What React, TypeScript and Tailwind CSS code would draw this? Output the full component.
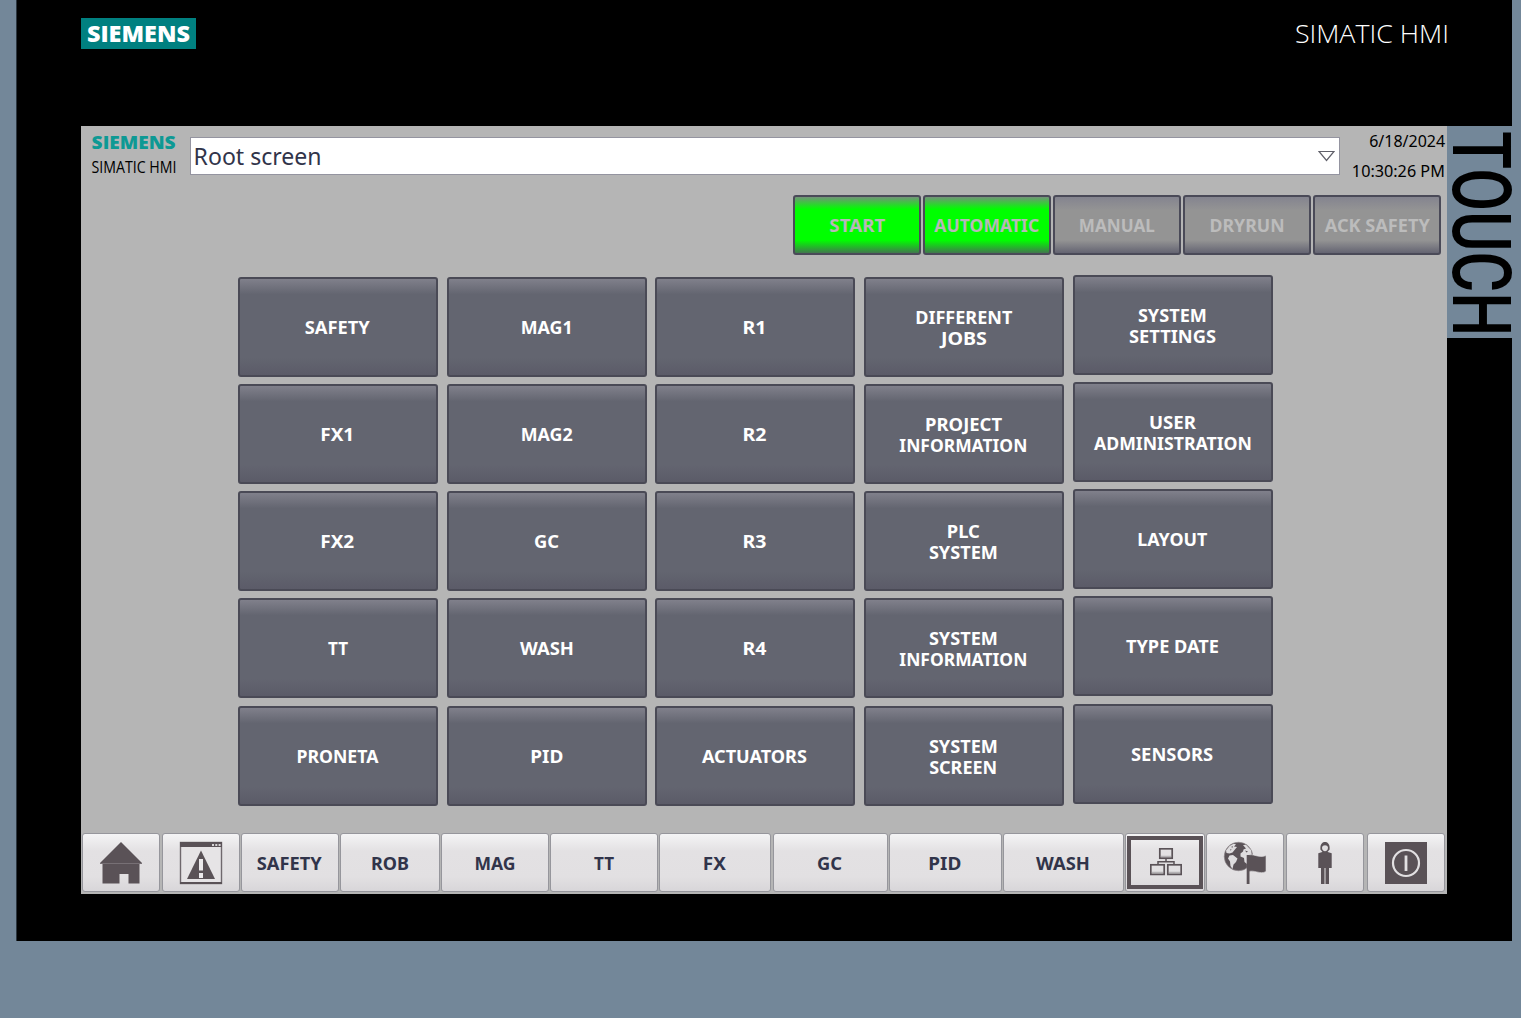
import { useLayoutEffect, useRef, useState } from "react";
import type { ReactNode } from "react";

/* Single line of text stretched horizontally to a given advance width. */
function Fit({ w, className = "", children }: { w: number; className?: string; children: ReactNode }) {
  const ref = useRef<HTMLSpanElement>(null);
  const [scale, setScale] = useState(1);
  useLayoutEffect(() => {
    if (ref.current) setScale(w / parseFloat(getComputedStyle(ref.current).width));
  }, [w]);
  return (
    <span className={`flex justify-center whitespace-nowrap ${className}`} style={{ width: w }}>
      <span ref={ref} className="inline-block shrink-0" style={{ transform: `scaleX(${scale})` }}>
        {children}
      </span>
    </span>
  );
}

type Line = [string, number];

const menu: Line[][][] = [
  [[["SAFETY", 65]], [["MAG1", 52]], [["R1", 24]], [["DIFFERENT", 97], ["JOBS", 46]], [["SYSTEM", 69], ["SETTINGS", 87]]],
  [[["FX1", 34]], [["MAG2", 52]], [["R2", 24]], [["PROJECT", 77], ["INFORMATION", 128]], [["USER", 47], ["ADMINISTRATION", 158]]],
  [[["FX2", 34]], [["GC", 25]], [["R3", 24]], [["PLC", 33], ["SYSTEM", 69]], [["LAYOUT", 70]]],
  [[["TT", 20]], [["WASH", 54]], [["R4", 24]], [["SYSTEM", 69], ["INFORMATION", 128]], [["TYPE DATE", 93]]],
  [[["PRONETA", 82]], [["PID", 33]], [["ACTUATORS", 105]], [["SYSTEM", 69], ["SCREEN", 68]], [["SENSORS", 82]]],
];

const modes: { label: string; w: number; on?: boolean }[] = [
  { label: "START", w: 56, on: true },
  { label: "AUTOMATIC", w: 105, on: true },
  { label: "MANUAL", w: 76 },
  { label: "DRYRUN", w: 75 },
  { label: "ACK SAFETY", w: 105 },
];

const nav: { label: string; w: number; size: string }[] = [
  { label: "SAFETY", w: 65, size: "w-[98px] mr-[1px]" },
  { label: "ROB", w: 38, size: "w-[100px] mr-[1px]" },
  { label: "MAG", w: 41, size: "w-[108px] mr-[1px]" },
  { label: "TT", w: 20, size: "w-[108px] mr-[1px]" },
  { label: "FX", w: 23, size: "w-[112px] mr-[2px]" },
  { label: "GC", w: 25, size: "w-[115px] mr-[1px]" },
  { label: "PID", w: 33, size: "w-[113px] mr-[1px]" },
  { label: "WASH", w: 54, size: "w-[121px] mr-[1px]" },
];

const key =
  "flex h-[59px] shrink-0 items-center justify-center rounded-[3px] border border-[#96969c] bg-[linear-gradient(180deg,#f4f4f5_0%,#e3e1e3_30%,#e2e0e2_75%,#d8d6d9_100%)]";

function HomeIcon() {
  return (
    <svg width="44" height="44" viewBox="0 0 44 44" fill="#5a5257">
      <path d="M22 1 43 22H1Z" />
      <path d="M3.500 23H40.500V42.500H29.500V33H20.500V42.500H3.500Z" />
      <path d="M1 22.500H43" stroke="#777075" strokeWidth="1" />
    </svg>
  );
}

function AlarmIcon() {
  return (
    <svg width="44" height="44" viewBox="0 0 44 44">
      <rect x="1.500" y="1.500" width="41" height="41" fill="#e6e4e6" stroke="#6f686d" strokeWidth="1.400" />
      <path d="M1 1H43V6H1Z" fill="#5a5257" />
      <path d="M1 41H43V43H1Z" fill="#5a5257" />
      <path d="M33 3H35V5H33ZM36.300 3H38.300V5H36.300ZM39.600 3H41.600V5H39.600Z" fill="#d8d6d8" />
      <path d="M22 9.500 36 38H8Z" fill="#5a5257" />
      <path d="M20 18H24V29.500H20ZM20 32H24V37H20Z" fill="#eceaec" />
    </svg>
  );
}

function NetworkIcon() {
  return (
    <svg width="32" height="28" viewBox="0 0 32 28" fill="#dedcde" stroke="#5a5257">
      <path d="M16 10V13.500M8 17V13.700H24V17" fill="none" strokeWidth="1.500" />
      <path d="M11 8.500H21M2 24.500H13M19 24.500H30" strokeWidth="1.600" stroke="#b5b2b5" />
      <rect x="9.800" y="0.800" width="12.400" height="9.400" fill="none" strokeWidth="1.700" />
      <rect x="0.800" y="16.800" width="13.400" height="9.600" fill="none" strokeWidth="1.700" />
      <rect x="17.800" y="16.800" width="13.400" height="9.600" fill="none" strokeWidth="1.700" />
    </svg>
  );
}

function LanguageIcon() {
  return (
    <svg width="44" height="44" viewBox="0 0 44 44">
      <circle cx="15.500" cy="15.500" r="14.300" fill="#5a5257" stroke="#938d91" strokeWidth="0.600" />
      <path
        d="M3 9.500 6.500 5 10.500 2.700 13 3.200 11 5.500 14 6 11.500 9 9.500 11.500 6.500 12.500 3.500 12Z"
        fill="#dedcde"
      />
      <path d="M6.500 14.500 10 14 14.500 17.500 13 21 10.500 23.500 9.500 28 7.500 25 7 20.500 5 17.500Z" fill="#dedcde" />
      <path d="M8.500 5.500 10 5.200 9 7.200ZM7 8.500 8.500 8.200 7.800 9.800Z" fill="#5a5257" />
      <path d="M20 4 23 3.800 28 9 28.800 13.500 25.500 14.500 24 23 21.500 21 21 17 17.500 15.500 17.500 12.500 20 10.500 20.500 8.500 23 7.500Z" fill="#dedcde" />
      <path d="M22 9.500 25 10.500 23.500 11.500Z" fill="#5a5257" />
      <path d="M24 14.500C30 11.500 36 18 43 14.500V30.500C37 34 31 28 24.500 31Z" fill="#5a5257" stroke="#dedcde" strokeWidth="0.600" />
      <rect x="23.700" y="14" width="2.800" height="29" fill="#5a5257" />
    </svg>
  );
}

function UserIcon() {
  return (
    <svg width="20" height="44" viewBox="0 0 20 44">
      <path d="M5.500 8.500C4 -1.500 16 -1.500 14.500 8.500L12.500 11H7.500Z" fill="#5a5257" />
      <path d="M7 6.500C7.500 3.500 12.500 3.500 13 6.500C13 11.500 7 11.500 7 6.500Z" fill="#e0dee0" />
      <path
        d="M7.300 11H12.700L16.700 12.300V27H14V43H6V27H3.300V12.300Z"
        fill="#5a5257"
      />
      <path d="M10 27V43" stroke="#e2e0e2" strokeWidth="1" />
    </svg>
  );
}

function PowerIcon() {
  return (
    <svg width="44" height="44" viewBox="0 0 44 44">
      <rect x="1" y="1" width="42" height="42" fill="#5a5257" />
      <circle cx="22" cy="22" r="13" fill="none" stroke="#e2e0e2" strokeWidth="2.200" />
      <path d="M22 14.500V30" stroke="#e2e0e2" strokeWidth="2.800" />
    </svg>
  );
}

export default function App() {
  return (
    <div className="flex h-[1018px] w-[1521px] items-start overflow-hidden bg-[#738799] pl-4 font-['Noto_Sans',sans-serif]">
      <div className="flex h-[940.5px] w-[1495.5px] flex-col border-l border-[#2c3640] bg-black">
        <header className="flex h-[126px] items-start justify-between pr-[63px] pl-[64px]">
          <div className="mt-[18px] flex h-[31px] w-[115px] items-center justify-center bg-[#008080] text-white">
            <Fit w={103} className="font-['Open_Sans',sans-serif] text-[22px] leading-[31px] font-extrabold">SIEMENS</Fit>
          </div>
          <Fit w={154} className="mt-[18px] font-['Open_Sans',sans-serif] text-[25px] leading-[30px] font-light text-white">
            SIMATIC HMI
          </Fit>
        </header>

        <div className="flex">
          <main className="ml-[64px] flex h-[768px] w-[1366px] shrink-0 flex-col bg-[#b5b5b5]">
            <div className="flex h-[69px] shrink-0 items-start">
              <div className="ml-[10px] flex w-[86px] flex-col items-center pt-[5px]">
                <Fit w={84} className="font-['Open_Sans',sans-serif] text-[18px] leading-[23px] font-extrabold text-[#0d9994]">SIEMENS</Fit>
                <Fit w={85} className="font-['Open_Sans',sans-serif] text-[16px] leading-[26px] text-black">SIMATIC HMI</Fit>
              </div>
              <div className="mt-[11px] ml-[13px] flex h-[38px] w-[1150px] items-center justify-between border border-[#9494a0] bg-white pr-[4px] pl-[2.500px] text-[#31344a]">
                <Fit w={128} className="text-[24px] leading-9">Root screen</Fit>
                <svg width="17" height="12" viewBox="0 0 17 12" fill="white" stroke="#60606a" strokeWidth="1.200">
                  <path d="M1 1.500H16L8.500 10.500Z" />
                </svg>
              </div>
              <div className="flex flex-1 flex-col items-end pr-[2px] text-[16.5px] leading-[30px] text-black">
                <Fit w={76}>6/18/2024</Fit>
                <Fit w={93}>10:30:26 PM</Fit>
              </div>
            </div>

            <div className="flex h-[60px] shrink-0 justify-end gap-[2px] pr-[6px]">
              {modes.map((m) => (
                <button
                  key={m.label}
                  className={`flex w-[128px] items-center justify-center rounded-[3px] border-2 border-[#4a4a58] text-[17px] leading-[21px] font-bold ${
                    m.on
                      ? "bg-[linear-gradient(180deg,#729378_0%,#00ff00_22%,#00ff00_77%,#42774e_100%)] text-[#b8b8b8]"
                      : "bg-[linear-gradient(180deg,#84848f_0%,#949494_24%,#949494_77%,#646472_100%)] text-[#bcbcbc]"
                  }`}
                >
                  <Fit w={m.w}>{m.label}</Fit>
                </button>
              ))}
            </div>

            <div className="mt-[22px] ml-[157px] grid h-[556px] grid-cols-[209px_208px_209px_209px_200px] grid-rows-[107px_107px_107px_108px_100px]">
              {menu.map((row, r) =>
                row.map((lines, c) => (
                  <button
                    key={`${r}-${c}`}
                    className={`flex h-[100px] w-[200px] flex-col items-center justify-center rounded-[3px] border-2 border-[#4a4a56] bg-[linear-gradient(180deg,#80808b_0%,#636570_16%,#636570_82%,#5b5b68_100%)] pr-[1px] text-[17px] leading-[21px] font-bold text-white ${
                      c === 4 ? "-mt-[2px]" : ""
                    } ${lines.length > 1 ? "pt-[2px]" : ""}`}
                  >
                    {lines.map(([text, w]) => (
                      <Fit key={text} w={w}>{text}</Fit>
                    ))}
                  </button>
                )),
              )}
            </div>

            <nav className="flex h-[61px] shrink-0 items-start pl-[1px] text-[17px] leading-[21px] font-bold text-[#31344a]">
              <button className={`${key} mr-[2px] w-[78px] pr-[1px]`}><HomeIcon /></button>
              <button className={`${key} mr-[1px] w-[78px] pr-[1px]`}><AlarmIcon /></button>
              {nav.map((n) => (
                <button key={n.label} className={`${key} ${n.size} pt-[1px] pr-[1px]`}>
                  <Fit w={n.w}>{n.label}</Fit>
                </button>
              ))}
              <button className={`${key} mr-[1px] w-[80px]`}>
                <span className="flex h-[53px] w-[76px] items-center justify-center border-4 border-[#5a5257] pb-[1px] pl-[2px]">
                  <NetworkIcon />
                </span>
              </button>
              <button className={`${key} mr-[2px] w-[78px] pr-[1px]`}><LanguageIcon /></button>
              <button className={`${key} mr-[3px] w-[78px] pr-[1px]`}><UserIcon /></button>
              <button className={`${key} w-[78px] pr-[1px]`}><PowerIcon /></button>
            </nav>
          </main>

          <aside className="flex h-[212px] w-[65px] shrink-0 items-center justify-center bg-[#738799] pt-[2px] pl-[2px]">
            <span className="block rotate-90">
              <Fit w={205} className="font-['Roboto',sans-serif] text-[81px] leading-[65px] font-medium text-black">TOUCH</Fit>
            </span>
          </aside>
        </div>
      </div>
    </div>
  );
}
